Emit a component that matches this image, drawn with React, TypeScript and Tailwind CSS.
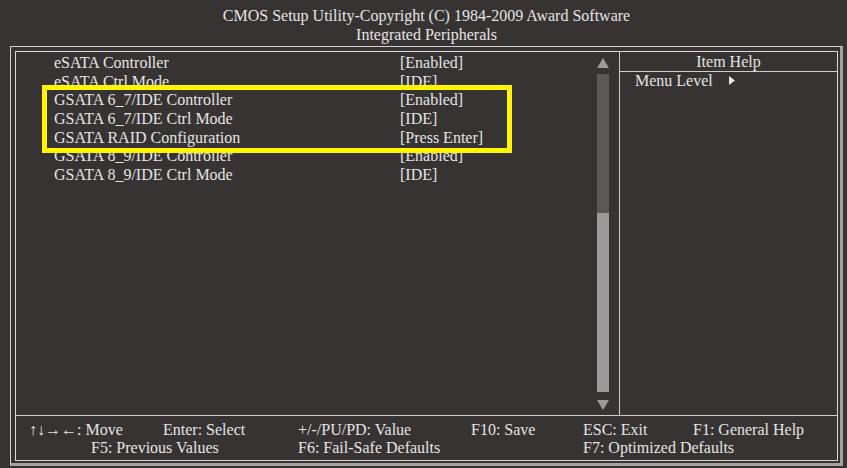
const items: [string, string][] = [
  ['eSATA Controller', '[Enabled]'],
  ['eSATA Ctrl Mode', '[IDE]'],
  ['GSATA 6_7/IDE Controller', '[Enabled]'],
  ['GSATA 6_7/IDE Ctrl Mode', '[IDE]'],
  ['GSATA RAID Configuration', '[Press Enter]'],
  ['GSATA 8_9/IDE Controller', '[Enabled]'],
  ['GSATA 8_9/IDE Ctrl Mode', '[IDE]'],
]

function Tri({ down }: { down?: boolean }) {
  return (
    <svg width="12" height="10" viewBox="0 0 12 10" className="block">
      <polygon points={down ? '0,0 12,0 6,10' : '6,0 12,10 0,10'} fill="#9c9a9a" />
    </svg>
  )
}

export default function App() {
  return (
    <div className="relative w-[847px] h-[468px] overflow-hidden bg-[#373333] text-[#e6e4e4] font-['Liberation_Serif',serif] text-[16px]">
      {/* title */}
      <div className="ml-[10px] w-[833px] h-[46px] pt-[6px] text-center leading-[19px]">
        <div>CMOS Setup Utility-Copyright (C) 1984-2009 Award Software</div>
        <div>Integrated Peripherals</div>
      </div>

      {/* double frame */}
      <div className="ml-[10px] w-[833px] h-[420px] border-l border-t border-r-[3px] border-b-[3px] border-l-[#d2d0d0] border-t-[#d2d0d0] border-r-[#a3a1a1] border-b-[#a3a1a1] pl-[4px] pt-[4px] pr-[2px] pb-[2px]">
        <div className="h-full border border-[#d8d6d6] flex flex-col">
          <div className="flex h-[364px] border-b border-[#cfcdcd]">
            {/* item list */}
            <div className="w-[604px] flex border-r border-[#cfcdcd]">
              <div className="flex-1 pt-[2px] pl-[38px] leading-[18.67px]">
                {items.map(([label, value]) => (
                  <div key={label} className="flex">
                    <span className="w-[346px]">{label}</span>
                    <span>{value}</span>
                  </div>
                ))}
              </div>
              <div className="w-[12px] mr-[10px] pt-[6px] flex flex-col">
                <Tri />
                <div className="mt-[6px] h-[139px] bg-[#5b5858]" />
                <div className="h-[179px] bg-[#9c9a9a]" />
                <div className="mt-[8px]">
                  <Tri down />
                </div>
              </div>
            </div>
            {/* item help */}
            <div className="flex-1">
              <div className="h-[20px] border-b border-[#cfcdcd] text-center leading-[19px]">Item Help</div>
              <div className="flex items-center pl-[15px] leading-[17px]">
                <span className="w-[94px]">Menu Level</span>
                <svg width="6" height="9" viewBox="0 0 6 9">
                  <polygon points="0,0 6,4.5 0,9" fill="#e6e4e4" />
                </svg>
              </div>
            </div>
          </div>

          {/* key legend */}
          <div className="flex-1 pt-[5px] pl-[13px] leading-[18px]">
            <div className="grid grid-cols-[134px_135px_173px_112px_110px_1fr]">
              <span>↑↓→←: Move</span>
              <span>Enter: Select</span>
              <span>+/-/PU/PD: Value</span>
              <span>F10: Save</span>
              <span>ESC: Exit</span>
              <span>F1: General Help</span>
            </div>
            <div className="grid grid-cols-[269px_285px_1fr]">
              <span className="pl-[62px]">F5: Previous Values</span>
              <span>F6: Fail-Safe Defaults</span>
              <span>F7: Optimized Defaults</span>
            </div>
          </div>
        </div>
      </div>

      {/* highlight overlay */}
      <div className="absolute left-[42px] top-[85px] w-[470px] h-[68px] border-[5px] border-[#fff500]" />
    </div>
  )
}
